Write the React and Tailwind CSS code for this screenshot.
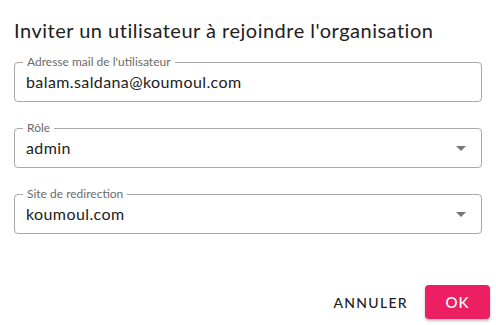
import React from 'react';

function Arrow() {
  return (
    <svg viewBox="0 0 24 24" className="w-6 h-6 fill-[#757575] shrink-0">
      <path d="M7 10l5 5 5-5z" />
    </svg>
  );
}

function Field({ label, value, select }) {
  return (
    <div className="relative h-[40px] border border-[#a9a9a9] rounded-[4px] flex items-center pl-[11px] pr-[8px]">
      <span className="absolute -top-[8px] left-[8px] px-[4px] bg-white text-[12px] leading-[14px] text-[#6b6b6b]">{label}</span>
      <span className="flex-1 text-[16px] leading-[20px] text-[#212121] tracking-[0.4px]">{value}</span>
      {select && <Arrow />}
    </div>
  );
}

export default function App() {
  return (
    <div className="w-[496px] h-[325px] bg-white flex flex-col px-[14px] font-['Lato',sans-serif]">
      <h2 className="mt-[18px] text-[20px] leading-[24px] text-[#212121] tracking-[0.5px]">
        Inviter un utilisateur à rejoindre l'organisation
      </h2>
      <div className="mt-[20px] flex flex-col gap-[26px]">
        <Field label="Adresse mail de l'utilisateur" value="balam.saldana@koumoul.com" />
        <Field label="Rôle" value="admin" select />
        <Field label="Site de redirection" value="koumoul.com" select />
      </div>
      <div className="mt-[51px] flex justify-end items-center -mr-[8px]">
        <button className="h-[34px] px-[8px] mr-[9px] text-[14px] font-medium tracking-[1.3px] text-[#212121] uppercase">Annuler</button>
        <button className="h-[34px] w-[65px] rounded-[4px] bg-[#ec1f63] text-white text-[15px] font-medium tracking-[1px] shadow-[0_2px_3px_rgba(0,0,0,0.25)]">OK</button>
      </div>
    </div>
  );
}
